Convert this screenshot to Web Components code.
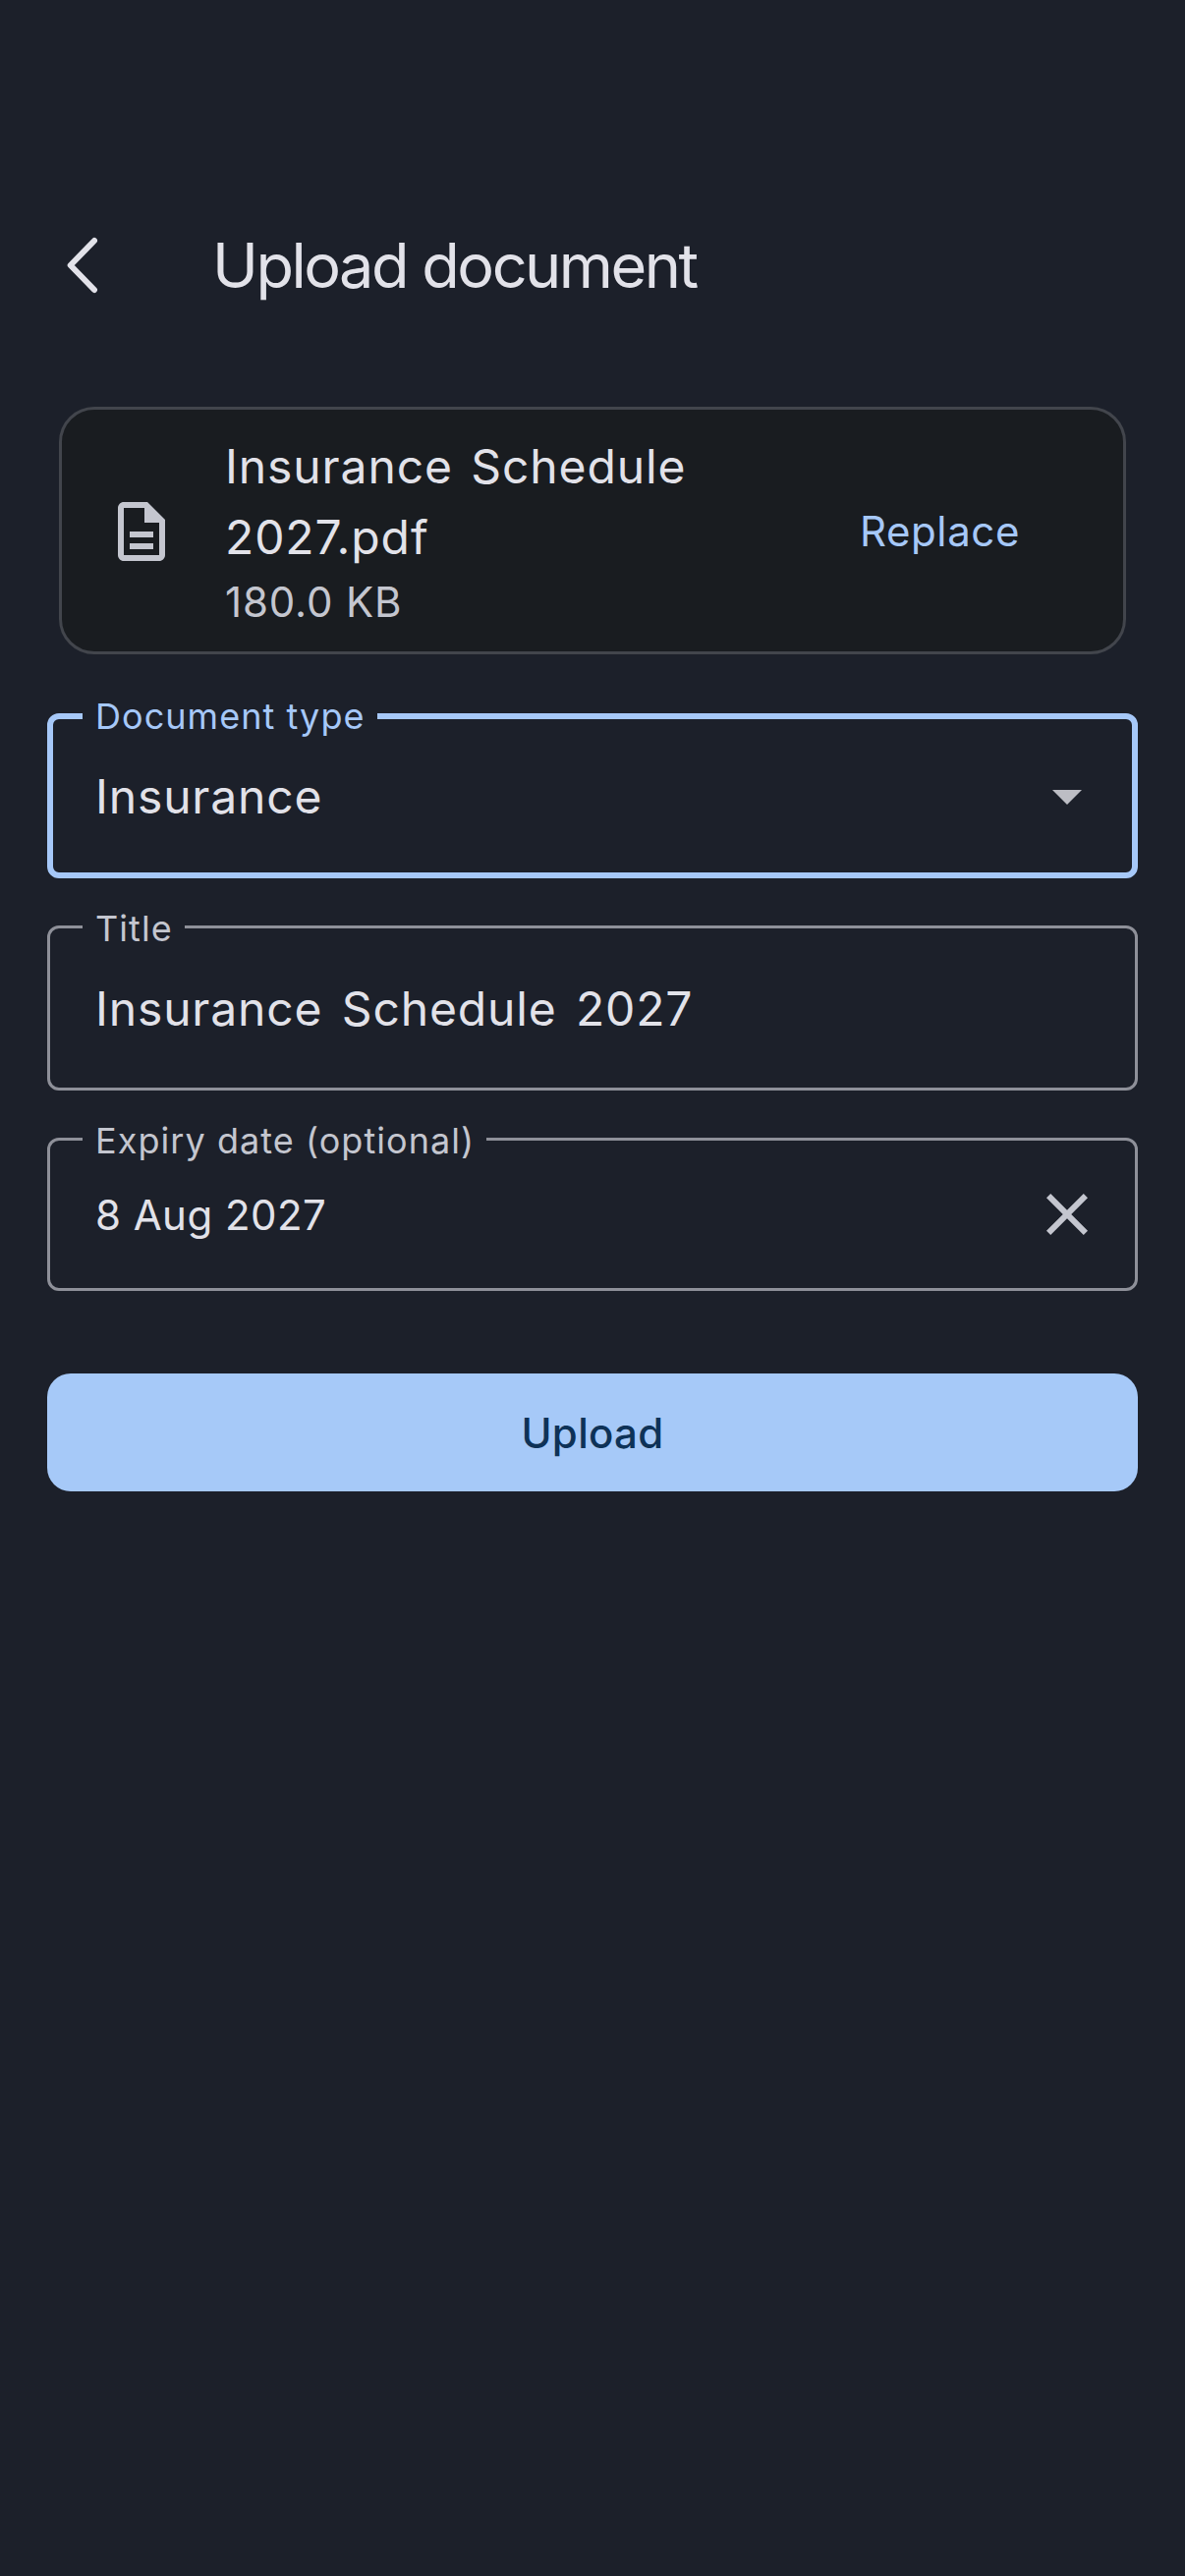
<!doctype html>
<html>
<head>
<meta charset="utf-8">
<title>Upload document</title>
<style>
  html, body { margin: 0; background: #1c202a; }
  body { font-family: Inter, "Noto Sans", sans-serif; color: #e2e2e9; }
</style>
</head>
<body>
<upload-screen>
  <app-bar title="Upload document"></app-bar>
  <file-card name="Insurance Schedule 2027.pdf" size="180.0 KB" action="Replace"></file-card>
  <outlined-field label="Document type" value="Insurance" trailing="dropdown" focused style="--field-h:168px;margin-top:60px"></outlined-field>
  <outlined-field label="Title" value="Insurance Schedule 2027" style="--field-h:168px;margin-top:48px"></outlined-field>
  <outlined-field label="Expiry date (optional)" value="8 Aug 2027" trailing="clear" style="--field-h:156px;--value-size:42px;--value-track:.45px;--value-word:0;margin-top:48px"></outlined-field>
  <primary-button style="margin-top:84px">Upload</primary-button>
</upload-screen>

<script>
class UploadScreen extends HTMLElement {
    constructor() {
        super();
        this.attachShadow({ mode: 'open' }).innerHTML = `
            <style>
                :host { display: block; box-sizing: border-box; min-height: 2622px; padding: 186px 48px 0; background: #1c202a; }
                .stack { display: flex; flex-direction: column; }
            </style>
            <div class="stack"><slot></slot></div>`;
    }
}

class AppBar extends HTMLElement {
    constructor() {
        super();
        this.attachShadow({ mode: 'open' });
    }

    connectedCallback() {
        this.shadowRoot.innerHTML = `
            <style>
                :host { display: flex; align-items: center; height: 168px; }
                svg { display: block; width: 72px; height: 72px; flex: none; margin-right: 96px; }
                h1 { margin: 0; font: 400 63px/84px Inter, sans-serif; letter-spacing: -2.5px; color: #e2e2e9; white-space: nowrap; }
            </style>
            <svg viewBox="0 0 72 72" fill="none" stroke="#e2e2e9" stroke-width="6" stroke-linecap="round" stroke-linejoin="round">
                <path d="M48 11 23.7 36 48 61"/>
            </svg>
            <h1>${this.getAttribute('title')}</h1>`;
    }
}

class FileCard extends HTMLElement {
    constructor() {
        super();
        this.attachShadow({ mode: 'open' });
    }

    connectedCallback() {
        this.shadowRoot.innerHTML = `
            <style>
                :host { display: block; margin: 60px 12px 0; }
                .card {
                    box-sizing: border-box;
                    display: flex; align-items: center;
                    padding: 22px 36px 20px 45px;
                    background: #191c20;
                    border: 3px solid #42454c;
                    border-radius: 36px;
                }
                svg { display: block; width: 72px; height: 72px; flex: none; margin-right: 49px; fill: #c4c6cf; }
                .info { flex: 1; min-width: 0; padding-right: 84px; }
                .name { font-size: 48px; line-height: 72px; letter-spacing: .9px; word-spacing: 4px; color: #e2e2e9; }
                .size { font-size: 42px; line-height: 60px; letter-spacing: .85px; color: #c4c6cf; }
                .action { font-size: 42px; line-height: 60px; font-weight: 400; letter-spacing: .6px; color: #a6c8f8; margin-right: 69px; }
            </style>
            <div class="card">
                <svg viewBox="0 0 24 24"><path d="M8 16h8v2H8zm0-4h8v2H8zm6-10H6c-1.1 0-2 .9-2 2v16c0 1.1.89 2 1.99 2H18c1.1 0 2-.9 2-2V8l-6-6zm4 18H6V4h7v5h5v11z"/></svg>
                <div class="info">
                    <div class="name">${this.getAttribute('name')}</div>
                    <div class="size">${this.getAttribute('size')}</div>
                </div>
                <div class="action">${this.getAttribute('action')}</div>
            </div>`;
    }
}

class OutlinedField extends HTMLElement {
    constructor() {
        super();
        this.attachShadow({ mode: 'open' });
    }

    connectedCallback() {
        const focused = this.hasAttribute('focused');
        const trailing = this.getAttribute('trailing');
        let icon = '';
        if (trailing === 'dropdown') {
            icon = '<svg viewBox="0 0 24 24" fill="#bcbdc4"><path d="M7 10l5 5 5-5z"/></svg>';
        } else if (trailing === 'clear') {
            icon = '<svg viewBox="0 0 24 24" fill="#c4c6cf"><path d="M19 6.41 17.59 5 12 10.59 6.41 5 5 6.41 10.59 12 5 17.59 6.41 19 12 13.41 17.59 19 19 17.59 13.41 12z"/></svg>';
        }
        const line = focused ? '6px solid #a6c8f8' : '3px solid #8e9099';
        this.shadowRoot.innerHTML = `
            <style>
                :host { display: block; position: relative; }
                .box {
                    box-sizing: border-box;
                    display: flex; align-items: center;
                    height: var(--field-h, 168px);
                    padding: 0 ${focused ? 30 : 33}px 0 ${focused ? 43 : 46}px;
                    border: ${line};
                    border-radius: 12px;
                }
                .value {
                    flex: 1;
                    font-size: var(--value-size, 48px);
                    letter-spacing: var(--value-track, .85px);
                    word-spacing: var(--value-word, 5px);
                    color: #e2e2e9;
                    white-space: nowrap;
                }
                svg { display: block; width: 72px; height: 72px; flex: none; }
                .label {
                    position: absolute; left: 36px; top: -21px;
                    padding: 0 12px 0 13px;
                    font-size: 36px; line-height: 48px; letter-spacing: 1.05px;
                    color: ${focused ? '#a6c8f8' : '#c4c6cf'};
                    background: #1c202a;
                    white-space: nowrap;
                }
            </style>
            <div class="box"><div class="value">${this.getAttribute('value')}</div>${icon}</div>
            <div class="label">${this.getAttribute('label')}</div>`;
    }
}

class PrimaryButton extends HTMLElement {
    constructor() {
        super();
        this.attachShadow({ mode: 'open' }).innerHTML = `
            <style>
                :host {
                    display: flex; align-items: center; justify-content: center;
                    height: 120px;
                    background: #a6c9f8;
                    border-radius: 24px;
                    color: #0e3257;
                    font-size: 42px; font-weight: 500; letter-spacing: .3px;
                }
            </style>
            <slot></slot>`;
    }
}

customElements.define('upload-screen', UploadScreen);
customElements.define('app-bar', AppBar);
customElements.define('file-card', FileCard);
customElements.define('outlined-field', OutlinedField);
customElements.define('primary-button', PrimaryButton);
</script>
</body>
</html>
